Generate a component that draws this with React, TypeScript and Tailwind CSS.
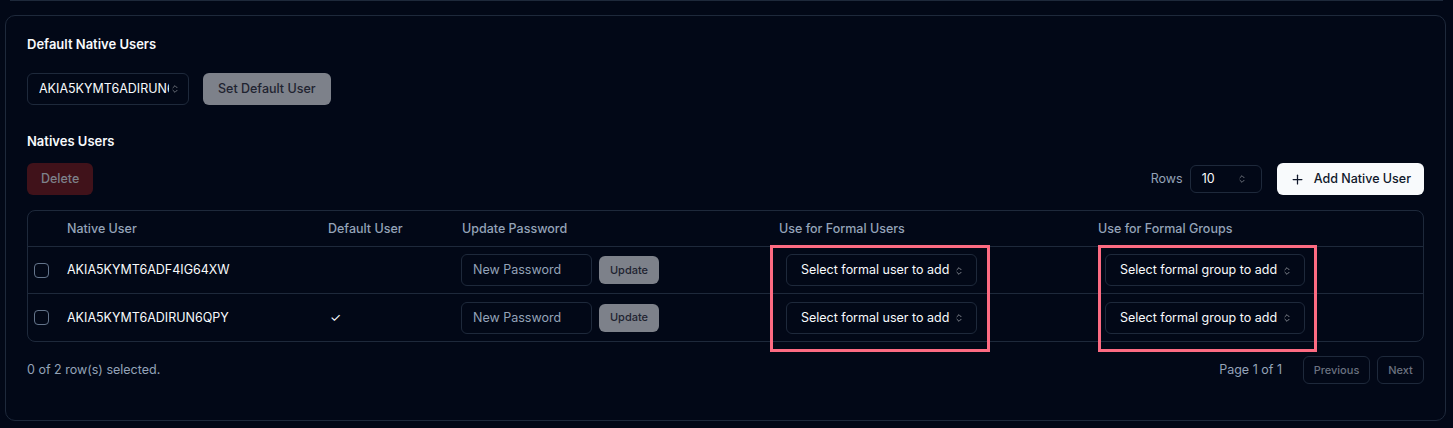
import React from "react";

const Chevrons = ({ className = "" }: { className?: string }) => (
  <svg viewBox="0 0 24 24" width="10" height="10" fill="none" stroke="currentColor" strokeWidth="2" strokeLinecap="round" strokeLinejoin="round" className={className}>
    <path d="m7 15 5 5 5-5" />
    <path d="m7 9 5-5 5 5" />
  </svg>
);

const Plus = () => (
  <svg viewBox="0 0 24 24" width="15" height="15" fill="none" stroke="currentColor" strokeWidth="2" strokeLinecap="round" strokeLinejoin="round">
    <path d="M5 12h14" />
    <path d="M12 5v14" />
  </svg>
);

const rows = [
  { user: "AKIA5KYMT6ADF4IG64XW", def: false },
  { user: "AKIA5KYMT6ADIRUN6QPY", def: true },
];

const grid = "grid grid-cols-[32px_261px_134px_317px_319px_1fr]";

export default function App() {
  return (
    <div className="w-[1453px] h-[428px] bg-[#020817] text-[#f8fafc] overflow-hidden" style={{ fontFamily: "Inter, 'Noto Sans', sans-serif" }}>
      <div className="mx-[10px] h-[1px] border-b border-[#1e293b]" />
      <div className="ml-[5px] mr-[7px] mt-[14px] h-[406px] rounded-[10px] border border-[#1e293b] px-[21px] pt-[18px]">
        <div className="text-[13px] leading-5 font-semibold">Default Native Users</div>
        <div className="mt-[19px] flex items-center gap-[14px]">
          <div className="flex h-8 w-[162px] items-center justify-between rounded-md border border-[#1e293b] pl-[11px] pr-[8px] text-[12.5px]">
            <span className="overflow-hidden whitespace-nowrap w-[130px]">AKIA5KYMT6ADIRUN6QPY</span>
            <Chevrons className="opacity-50" />
          </div>
          <button className="h-8 rounded-md bg-[#7d818a] px-[15px] text-[12.5px] font-medium text-[#1f2330]">Set Default User</button>
        </div>
        <div className="mt-[26px] text-[13px] leading-5 font-semibold">Natives Users</div>
        <div className="mt-[12px] flex items-center justify-between">
          <button className="h-8 rounded-md bg-[#40121a] px-[14px] text-[12.5px] font-medium text-[#7d818a]">Delete</button>
          <div className="flex items-center">
            <span className="text-[12.5px] text-[#94a3b8]">Rows</span>
            <div className="ml-[7px] flex h-7 w-[72px] items-center justify-between rounded-md border border-[#1e293b] pl-[11px] pr-[14px] text-[12.5px]">
              <span>10</span>
              <Chevrons className="opacity-50" />
            </div>
            <button className="ml-[15px] flex h-8 items-center gap-[9px] rounded-md bg-[#f8fafc] pl-[13px] pr-[13px] text-[12.5px] font-medium text-[#0f172a]">
              <Plus />
              Add Native User
            </button>
          </div>
        </div>
        <div className="relative mt-[15px] rounded-lg border border-[#1e293b]">
          <div className={`${grid} h-[36px] items-center border-b border-[#1e293b] pt-[1px] text-[12.5px] text-[#94a3b8] font-medium`}>
            <div />
            <div className="pl-[7px]">Native User</div>
            <div className="pl-[7px]">Default User</div>
            <div className="pl-[7px]">Update Password</div>
            <div className="pl-[7px]">Use for Formal Users</div>
            <div className="pl-[7px]">Use for Formal Groups</div>
          </div>
          {rows.map((r, i) => (
            <div key={r.user} className={`${grid} h-[47px] items-center text-[12.5px] ${i === 0 ? "border-b border-[#1e293b]" : ""}`}>
              <div className="pl-[6px]">
                <div className="h-[15px] w-[15px] rounded-[4px] border border-[#64748b]" />
              </div>
              <div className="pl-[7px] pt-[1px]">{r.user}</div>
              <div className="pl-[9px] pt-[1px]">{r.def ? "✓" : ""}</div>
              <div className="flex items-center gap-[7px] pl-[6px]">
                <div className="flex h-8 w-[131px] items-center rounded-md border border-[#1e293b] pl-[11px] pt-[1px] text-[12.5px] text-[#94a3b8]">New Password</div>
                <button className="h-7 w-[60px] rounded-md bg-[#7d818a] text-[11px] font-medium text-[#1f2330]">Update</button>
              </div>
              <div className="pl-[14px]">
                <div className="flex h-8 w-[191px] items-center gap-[5px] rounded-md border border-[#1e293b] pl-[14px] pt-[1px] text-[12.5px]">
                  Select formal user to add
                  <Chevrons className="opacity-60" />
                </div>
              </div>
              <div className="pl-[14px]">
                <div className="flex h-8 w-[200px] items-center gap-[5px] rounded-md border border-[#1e293b] pl-[14px] pt-[1px] text-[12.5px]">
                  Select formal group to add
                  <Chevrons className="opacity-60" />
                </div>
              </div>
            </div>
          ))}
          <div className="pointer-events-none absolute left-[742px] top-[34px] h-[107px] w-[220px] border-[3px] border-[#fd6b82]" />
          <div className="pointer-events-none absolute left-[1070px] top-[34px] h-[107px] w-[219px] border-[3px] border-[#fd6b82]" />
        </div>
        <div className="mt-[14px] flex items-center justify-between">
          <span className="text-[12.5px] text-[#94a3b8]">0 of 2 row(s) selected.</span>
          <div className="flex items-center">
            <span className="text-[12.5px] text-[#94a3b8]">Page 1 of 1</span>
            <button className="ml-[21px] h-7 w-[67px] rounded-md border border-[#1e293b] text-[11px] font-medium text-[#6b7280]">Previous</button>
            <button className="ml-[7px] h-7 w-[47px] rounded-md border border-[#1e293b] text-[11px] font-medium text-[#6b7280]">Next</button>
          </div>
        </div>
      </div>
    </div>
  );
}
